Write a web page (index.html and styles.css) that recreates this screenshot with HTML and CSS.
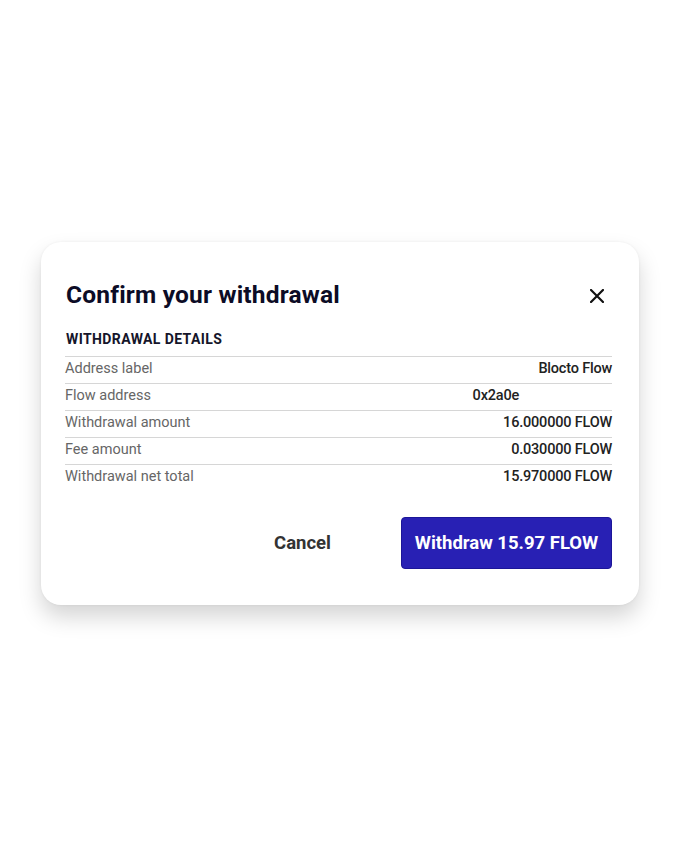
FILE: index.html
```html
<!DOCTYPE html>
<html>
<head>
<meta charset="utf-8">
<link rel="stylesheet" href="styles.css">
</head>
<body>
<div class="page">
  <div class="modal">
    <div class="header">
      <h1 class="title">Confirm your withdrawal</h1>
      <button class="close" aria-label="Close">
        <svg width="14" height="14" viewBox="0 0 14 14"><path d="M1 1L13 13M13 1L1 13" stroke="#111" stroke-width="2.2" stroke-linecap="square"/></svg>
      </button>
    </div>
    <div class="section-title">WITHDRAWAL DETAILS</div>
    <div class="rows">
      <div class="row"><span class="label">Address label</span><span class="value">Blocto Flow</span></div>
      <div class="row"><span class="label">Flow address</span><span class="value addr">0x2a0e</span></div>
      <div class="row"><span class="label">Withdrawal amount</span><span class="value">16.000000 FLOW</span></div>
      <div class="row"><span class="label">Fee amount</span><span class="value">0.030000 FLOW</span></div>
      <div class="row"><span class="label">Withdrawal net total</span><span class="value">15.970000 FLOW</span></div>
    </div>
    <div class="actions">
      <button class="cancel">Cancel</button>
      <button class="primary">Withdraw 15.97 FLOW</button>
    </div>
  </div>
</div>
</body>
</html>
```
FILE: styles.css
```css
html, body {
  margin: 0;
  padding: 0;
  background: #fff;
}
body {
  font-family: Roboto, "Noto Sans", sans-serif;
}
.page {
  padding: 242px 41px 60px 41px;
}
.modal {
  width: 598px;
  box-sizing: border-box;
  height: 363px;
  background: #fff;
  border-radius: 20px;
  box-shadow: 0 12px 22px rgba(0, 0, 0, 0.17), 0 0 3px rgba(0, 0, 0, 0.06);
  padding: 38px 27px 0 24px;
}
.header {
  display: flex;
  justify-content: space-between;
  align-items: center;
  height: 28px;
}
.title {
  margin: 0 0 0 1px;
  font-size: 24.5px;
  font-weight: 700;
  color: #0c0c26;
  letter-spacing: 0.2px;
}
.close {
  border: 0;
  background: none;
  padding: 0;
  margin-right: 8px;
  margin-top: 3px;
  width: 14px;
  height: 14px;
  display: flex;
}
.section-title {
  margin-top: 23px;
  margin-left: 1px;
  font-size: 14px;
  font-weight: 700;
  color: #15152a;
  letter-spacing: 0.4px;
  height: 17px;
  padding-bottom: 8px;
}
.rows {
  border-top: 1px solid #d6d6d6;
}
.row {
  display: flex;
  justify-content: space-between;
  align-items: center;
  box-sizing: border-box;
  height: 27px;
  padding-bottom: 3px;
  border-bottom: 1px solid #d6d6d6;
  font-size: 14.5px;
  line-height: 18px;
}
.row:last-child {
  border-bottom: 0;
}
.label {
  color: #666;
}
.value {
  color: #222;
  font-weight: 500;
  letter-spacing: -0.2px;
}
.addr {
  margin-right: 93px;
}
.actions {
  display: flex;
  justify-content: flex-end;
  align-items: center;
  margin-top: 25px;
}
.cancel {
  border: 0;
  background: none;
  font-family: inherit;
  font-size: 18.5px;
  font-weight: 700;
  color: #333;
  margin-right: 70px;
  padding: 0;
}
.primary {
  width: 211px;
  height: 52px;
  border: 1px solid #1c1698;
  border-radius: 4px;
  background: #2820b4;
  color: #fff;
  font-family: inherit;
  font-size: 18.5px;
  font-weight: 700;
}
```
